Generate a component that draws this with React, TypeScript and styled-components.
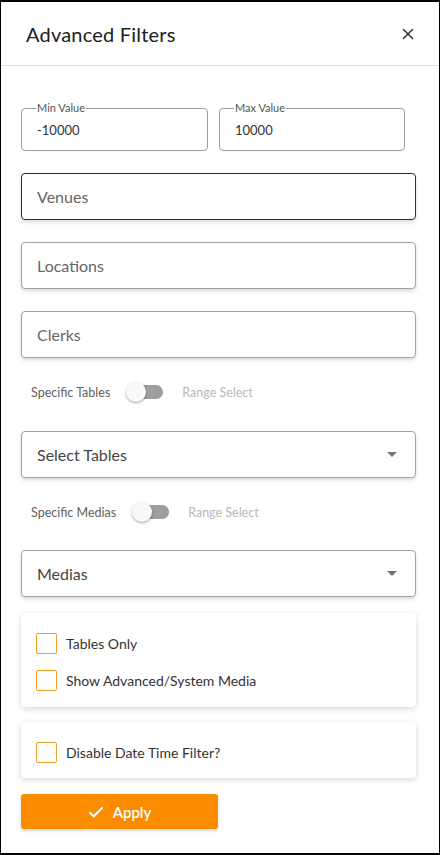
import styled, { createGlobalStyle } from 'styled-components';

const GlobalStyle = createGlobalStyle`
  html, body {
    margin: 0;
    padding: 0;
    background: #ffffff;
  }
  body {
    font-family: 'Lato', 'Noto Sans', sans-serif;
    color: #333333;
  }
  * {
    box-sizing: border-box;
  }
`;

const CloseIcon = () => (
  <svg width='12' height='12' viewBox='0 0 12 12'>
    <path d='M1.5 1.5 L10.5 10.5 M10.5 1.5 L1.5 10.5' stroke='#263238' strokeWidth='1.5' strokeLinecap='round' />
  </svg>
);

const CheckIcon = () => (
  <svg width='16' height='12' viewBox='0 0 16 12'>
    <path d='M1.5 6.2 L5.8 10.3 L14.5 1.5' fill='none' stroke='#ffffff' strokeWidth='2' />
  </svg>
);

const SwitchRow = ({ label }: { label: string }) => (
  <ToggleRow>
    <ToggleLabel>{label}</ToggleLabel>
    <Switch>
      <SwitchTrack />
      <SwitchKnob />
    </Switch>
    <ToggleLabel $muted>Range Select</ToggleLabel>
  </ToggleRow>
);

const CheckRow = ({ label }: { label: string }) => (
  <CheckLine>
    <CheckBox />
    <CheckText>{label}</CheckText>
  </CheckLine>
);

const App = () => {
  return (
    <>
      <GlobalStyle />
      <Frame>
        <Header>
          <Title>Advanced Filters</Title>
          <CloseButton>
            <CloseIcon />
          </CloseButton>
        </Header>
        <Body>
          <RangeRow>
            <Outlined>
              <Legend>Min Value</Legend>
              <RangeValue>-10000</RangeValue>
            </Outlined>
            <Outlined>
              <Legend>Max Value</Legend>
              <RangeValue>10000</RangeValue>
            </Outlined>
          </RangeRow>

          <Field $focused $gap={22}>
            <Placeholder>Venues</Placeholder>
          </Field>
          <Field $gap={22}>
            <Placeholder>Locations</Placeholder>
          </Field>
          <Field $gap={22}>
            <Placeholder>Clerks</Placeholder>
          </Field>

          <SwitchRow label='Specific Tables' />

          <Field $gap={24}>
            <Placeholder $dark>Select Tables</Placeholder>
            <Caret />
          </Field>

          <SwitchRow label='Specific Medias' />

          <Field $gap={23}>
            <Placeholder $dark>Medias</Placeholder>
            <Caret />
          </Field>

          <Card $gap={16}>
            <CheckRow label='Tables Only' />
            <CheckRow label='Show Advanced/System Media' />
          </Card>

          <Card $gap={15}>
            <CheckRow label='Disable Date Time Filter?' />
          </Card>

          <ApplyButton>
            <CheckIcon />
            <span>Apply</span>
          </ApplyButton>
        </Body>
      </Frame>
    </>
  );
};

const Frame = styled.div`
  width: 440px;
  height: 855px;
  border-style: solid;
  border-color: #000000;
  border-width: 2px 1px 2px 1px;
  background: #ffffff;
  overflow: hidden;
`;

const Header = styled.div`
  height: 64px;
  display: flex;
  align-items: center;
  justify-content: space-between;
  padding: 0 25px 0 25px;
  border-bottom: 1px solid #e0e0e0;
`;

const Title = styled.h1`
  margin: 0;
  font-size: 20px;
  font-weight: 400;
  color: #212121;
  letter-spacing: 0.2px;
`;

const CloseButton = styled.div`
  display: flex;
  align-items: center;
  justify-content: center;
  width: 12px;
  height: 12px;
`;

const Body = styled.div`
  padding: 42px 23px 0 20px;
  display: flex;
  flex-direction: column;
`;

const RangeRow = styled.div`
  display: grid;
  grid-template-columns: 187px 186px;
  column-gap: 11px;
`;

const Outlined = styled.fieldset`
  margin: -6px 0 0;
  height: 49px;
  padding: 0 15px;
  border: 1px solid #9e9e9e;
  border-radius: 4px;
  display: flex;
  align-items: center;
`;

const Legend = styled.legend`
  font-size: 11px;
  color: #555555;
  padding: 0 1px;
  margin-left: -1px;
  line-height: 12px;
`;

const RangeValue = styled.div`
  font-size: 13px;
  color: #333333;
  margin-top: -4px;
`;

const Field = styled.div<{ $focused?: boolean; $gap: number }>`
  margin-top: ${(p) => p.$gap}px;
  height: 47px;
  display: flex;
  align-items: center;
  justify-content: space-between;
  padding: 0 15px 0 15px;
  border: 1px solid ${(p) => (p.$focused ? '#263238' : '#a3a3a3')};
  border-radius: 4px;
  background: #ffffff;
  box-shadow: 0 3px 5px -1px rgba(0, 0, 0, 0.12), 0 1px 4px rgba(0, 0, 0, 0.06);
`;

const Placeholder = styled.span<{ $dark?: boolean }>`
  font-size: 16px;
  color: ${(p) => (p.$dark ? '#444444' : '#666666')};
`;

const Caret = styled.span`
  width: 0;
  height: 0;
  border-left: 5px solid transparent;
  border-right: 5px solid transparent;
  border-top: 5px solid #757575;
  margin-right: 3px;
`;

const ToggleRow = styled.div`
  margin-top: 19px;
  height: 30px;
  display: flex;
  align-items: center;
  padding-left: 10px;
`;

const ToggleLabel = styled.span<{ $muted?: boolean }>`
  font-size: 12.5px;
  color: ${(p) => (p.$muted ? '#b8b8b8' : '#616161')};
`;

const Switch = styled.div`
  position: relative;
  width: 38px;
  height: 20px;
  margin: 0 18px 0 16px;
`;

const SwitchTrack = styled.div`
  position: absolute;
  left: 6px;
  top: 3px;
  width: 31px;
  height: 14px;
  border-radius: 7px;
  background: #9e9e9e;
`;

const SwitchKnob = styled.div`
  position: absolute;
  left: 0;
  top: 0;
  width: 20px;
  height: 20px;
  border-radius: 50%;
  background: #fafafa;
  box-shadow: 0 1px 3px rgba(0, 0, 0, 0.3), 0 1px 1px rgba(0, 0, 0, 0.1);
`;

const Card = styled.div<{ $gap: number }>`
  margin-top: ${(p) => p.$gap}px;
  padding: 20px 15px 16px;
  border-radius: 4px;
  background: #ffffff;
  box-shadow: 0 2px 6px rgba(0, 0, 0, 0.14), 0 0 2px rgba(0, 0, 0, 0.05);
  display: flex;
  flex-direction: column;
  gap: 16px;

  & + & {
    padding-bottom: 15px;
  }
`;

const CheckLine = styled.label`
  display: flex;
  align-items: center;
  gap: 9px;
`;

const CheckBox = styled.span`
  width: 21px;
  height: 21px;
  border: 1.5px solid #f59a23;
  border-radius: 2px;
  background: #ffffff;
`;

const CheckText = styled.span`
  font-size: 14px;
  color: #333333;
`;

const ApplyButton = styled.button`
  margin-top: 16px;
  width: 197px;
  height: 35px;
  border: none;
  border-radius: 3px;
  background: #fb8c00;
  color: #ffffff;
  font-family: inherit;
  font-size: 15px;
  font-weight: 600;
  display: flex;
  align-items: center;
  justify-content: center;
  gap: 9px;
  box-shadow: 0 2px 3px rgba(0, 0, 0, 0.15);
`;

export default App;
